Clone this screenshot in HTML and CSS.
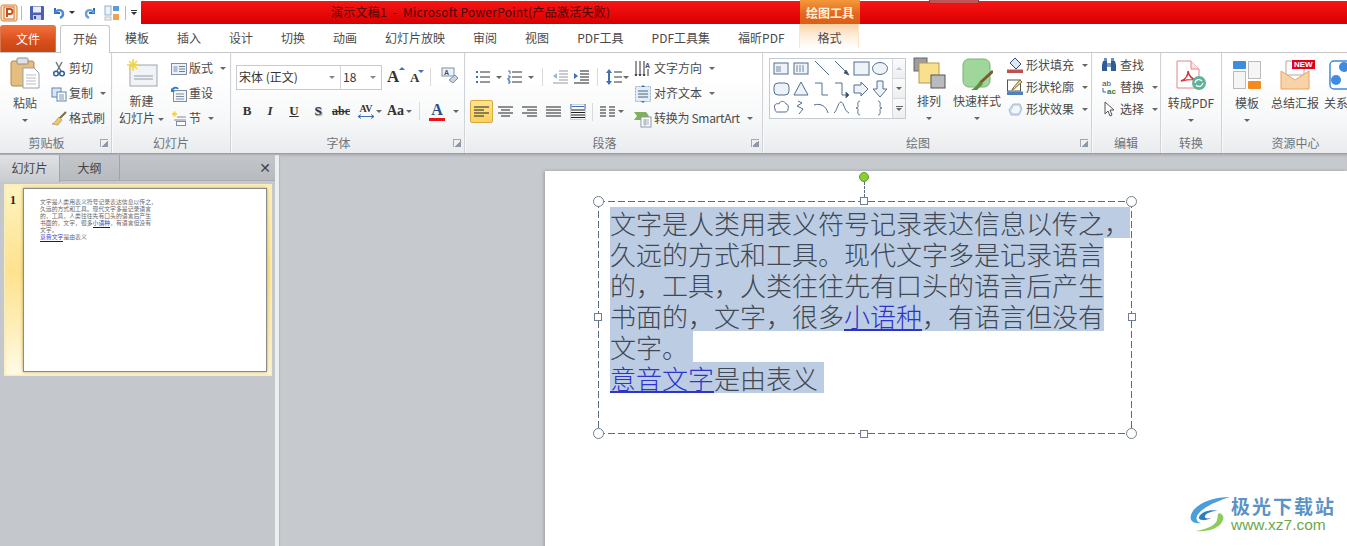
FILE: index.html
```html
<!DOCTYPE html>
<html lang="zh-CN">
<head>
<meta charset="utf-8">
<title>演示文稿1 - Microsoft PowerPoint</title>
<link rel="stylesheet" href="styles.css">
</head>
<body>
<div class="app">
  <header class="titlebar">
    <div class="qat">
      <svg class="ic-pp" width="18" height="18" viewBox="0 0 18 18"><rect x="1" y="1" width="16" height="16" rx="2" fill="#fbe3c8" stroke="#d9812f"/><rect x="4" y="3" width="10" height="12" fill="#fff" stroke="#d9691f"/><path d="M7 13V5h3a2 2 0 0 1 0 5H7" fill="none" stroke="#c8501a" stroke-width="2"/></svg>
      <i class="qat-sep"></i>
      <svg class="ic-save" width="16" height="16" viewBox="0 0 16 16"><rect x="1" y="1" width="14" height="14" rx="1" fill="#4d5fb4"/><rect x="4" y="1.500" width="8" height="6" fill="#e9eefa"/><rect x="4" y="10" width="8" height="5" fill="#c9d0e6"/><rect x="5" y="11" width="2" height="3" fill="#3d4a8f"/></svg>
      <svg class="ic-undo" width="14" height="14" viewBox="0 0 14 14"><path d="M3 2v5h5" fill="none" stroke="#2f6db5" stroke-width="2"/><path d="M3 7c2-4 8-4 8 1 0 2-1 3-3 4" fill="none" stroke="#4a8ad0" stroke-width="2.400"/></svg>
      <i class="caret caret-dark"></i>
      <svg class="ic-redo" width="14" height="14" viewBox="0 0 14 14"><path d="M11 2v5H6" fill="none" stroke="#2f6db5" stroke-width="2"/><path d="M11 7C9 3 3 3 3 8c0 2 1 3 3 4" fill="none" stroke="#6aa0d8" stroke-width="2.400"/></svg>
      <svg class="ic-layout" width="16" height="16" viewBox="0 0 16 16"><rect x="1" y="1" width="6" height="9" fill="#eef3f8" stroke="#8fb1d0"/><rect x="9" y="1" width="6" height="5" fill="#5a9bd8"/><rect x="1" y="12" width="6" height="3" fill="#eef3f8" stroke="#c0c0c0"/><rect x="9" y="9" width="6" height="6" fill="#f2a24a"/></svg>
      <i class="qat-sep qat-sep-b"></i>
      <span class="qat-more"><i class="qat-bar"></i><i class="caret caret-dark"></i></span>
    </div>
    <div class="redbar">
      <div class="doc-title">演示文稿1 &nbsp;-&nbsp; Microsoft PowerPoint(产品激活失败)</div>
      <div class="ctx-head">绘图工具</div>
      <div class="win-tab"></div>
    </div>
  </header>

  <nav class="tabs">
    <div class="tab tab-file">文件</div>
    <div class="tab tab-active">开始</div>
    <div class="tab">模板</div>
    <div class="tab">插入</div>
    <div class="tab">设计</div>
    <div class="tab">切换</div>
    <div class="tab">动画</div>
    <div class="tab">幻灯片放映</div>
    <div class="tab">审阅</div>
    <div class="tab">视图</div>
    <div class="tab">PDF工具</div>
    <div class="tab">PDF工具集</div>
    <div class="tab">福昕PDF</div>
    <div class="tab tab-ctx">格式</div>
  </nav>

  <section class="ribbon">
    <div class="group g-clip">
      <div class="group-body">
        <div class="big big-paste">
          <svg width="30" height="32" viewBox="0 0 30 32"><rect x="1" y="4" width="23" height="25" rx="2" fill="#e4bd7f" stroke="#b08a50"/><rect x="7" y="1" width="11" height="6" rx="1" fill="#dfe3e8" stroke="#8a8f96"/><path d="M13 11h11l5 5v15H13z" fill="#fff" stroke="#9aa0a8"/><path d="M16 18h10M16 21h10M16 24h10M16 27h10" stroke="#b8bcc2"/></svg>
          <span class="big-label">粘贴</span>
          <i class="caret"></i>
        </div>
        <div class="rows">
          <div class="row"><svg width="16" height="16" viewBox="0 0 16 16"><path d="M5 1l5 9M11 1L6 10" stroke="#6d7886" stroke-width="1.500"/><circle cx="5" cy="12.500" r="2.300" fill="none" stroke="#2f5f9f" stroke-width="1.500"/><circle cx="11" cy="12.500" r="2.300" fill="none" stroke="#2f5f9f" stroke-width="1.500"/></svg><span>剪切</span></div>
          <div class="row"><svg width="16" height="16" viewBox="0 0 16 16"><rect x="1" y="2" width="9" height="9" fill="#dbe7f5" stroke="#5a84b5"/><rect x="6" y="6" width="9" height="9" fill="#fff" stroke="#5a84b5"/><path d="M8 9h5M8 11h5M8 13h5" stroke="#7b93b0"/></svg><span>复制</span><i class="caret"></i></div>
          <div class="row"><svg width="16" height="16" viewBox="0 0 16 16"><path d="M15 1L8 8" stroke="#7b6a52" stroke-width="2"/><path d="M8 6l3 3-4 5-6-1c3-1 4-4 7-7z" fill="#e9c86e" stroke="#a98a3d" stroke-width=".6"/></svg><span>格式刷</span></div>
        </div>
      </div>
      <div class="group-label has-launcher">剪贴板<i class="launcher"></i></div>
    </div>

    <div class="group g-slides">
      <div class="group-body">
        <div class="big big-new">
          <svg width="32" height="30" viewBox="0 0 32 30"><rect x="4" y="6" width="27" height="21" fill="#f1f3f6" stroke="#9aa5b2"/><path d="M8 17h19M8 20h19" stroke="#c2c8d0" stroke-width="2"/><path d="M7 0v12M1 6h12M3 2l8 8M11 2l-8 8" stroke="#f3d445" stroke-width="1.600"/></svg>
          <span class="big-label">新建</span>
          <span class="big-label">幻灯片<i class="caret caret-in"></i></span>
        </div>
        <div class="rows">
          <div class="row"><svg width="16" height="16" viewBox="0 0 16 16"><rect x=".5" y="2.500" width="15" height="11" fill="#eef2f7" stroke="#7e8ea2"/><rect x="2.500" y="5" width="4" height="6" fill="#a9c0da"/><path d="M8 5.500h6M8 8h6M8 10.500h6" stroke="#6d7c90"/></svg><span>版式</span><i class="caret"></i></div>
          <div class="row"><svg width="16" height="16" viewBox="0 0 16 16"><rect x="2.500" y="4.500" width="13" height="11" fill="#f0f3f7" stroke="#7e8ea2"/><path d="M5 8h8M5 10.500h8M5 13h8" stroke="#7e8ea2"/><path d="M1 5c1-4 5-4 6-2" fill="none" stroke="#2f7fc8" stroke-width="1.800"/><path d="M0 2v4h4z" fill="#2f7fc8"/></svg><span>重设</span></div>
          <div class="row"><svg width="16" height="16" viewBox="0 0 16 16"><path d="M1 3h5M3.500 .5v5" stroke="#f3d445" stroke-width="2"/><path d="M6 6h9M3 9h12" stroke="#7e8ea2"/><rect x="5.500" y="10.500" width="9" height="4" fill="#fff" stroke="#7e8ea2"/></svg><span>节</span><i class="caret"></i></div>
        </div>
      </div>
      <div class="group-label">幻灯片</div>
    </div>

    <div class="group g-font">
      <div class="group-body font-body">
        <div class="font-row">
          <div class="selects">
            <div class="select sel-font"><span>宋体 (正文)</span><i class="caret"></i></div>
            <div class="select sel-size"><span>18</span><i class="caret"></i></div>
          </div>
          <span class="grow-a">A<sup class="tick-up"></sup></span>
          <span class="shrink-a">A<sup class="tick-down"></sup></span>
          <i class="vsep"></i>
          <svg class="eraser" width="18" height="18" viewBox="0 0 18 18"><rect x="1" y="1" width="12" height="8" fill="#eef2f7" stroke="#7e8ea2"/><text x="3" y="7.500" class="tiny-a">A</text><path d="M8 13l6-5 3 3-5 5z" fill="#c9d4e2" stroke="#8090a4"/></svg>
        </div>
        <div class="font-row fmt-row">
          <b class="fmt fmt-b">B</b>
          <i class="fmt fmt-i">I</i>
          <span class="fmt fmt-u">U</span>
          <span class="fmt fmt-s">S</span>
          <span class="fmt fmt-abc">abc</span>
          <span class="fmt fmt-av"><span class="av-t">AV</span><svg width="16" height="5" viewBox="0 0 16 5"><path d="M0 2.500h16M3 .5L0 2.500l3 2M13 .5l3 2-3 2" fill="none" stroke="#3f6fb5"/></svg></span><i class="caret caret-sm"></i>
          <span class="fmt fmt-aa">Aa</span><i class="caret caret-sm"></i>
          <i class="vsep vsep-fmt"></i>
          <span class="fmt fmt-color">A</span><i class="caret caret-sm"></i>
        </div>
      </div>
      <div class="group-label has-launcher">字体<i class="launcher"></i></div>
    </div>

    <div class="group g-para">
      <div class="group-body para-body">
        <div class="para-left">
          <div class="para-row pr-top">
            <svg class="pi-bul" width="16" height="14" viewBox="0 0 16 14"><path d="M1 1h2v2H1zM1 6h2v2H1zM1 11h2v2H1z" fill="#3f6fb5"/><path d="M5 2h10M5 7h10M5 12h10" stroke="#333"/></svg><i class="caret"></i>
            <svg class="pi-num" width="16" height="14" viewBox="0 0 16 14"><path d="M1 1h2v3M1 6h2v2H1v2h2M1 11h2v2H1" fill="none" stroke="#3f6fb5"/><path d="M5 2h10M5 7h10M5 12h10" stroke="#333"/></svg><i class="caret"></i>
            <i class="vsep vsep-para"></i>
            <svg class="pi-out" width="16" height="14" viewBox="0 0 16 14"><path d="M7 1h9M7 4h9M7 7h9M7 10h9M1 13h15" stroke="#999"/><path d="M5 3L1 6l4 3z" fill="#9db6d4"/></svg>
            <svg class="pi-in" width="16" height="14" viewBox="0 0 16 14"><path d="M7 1h9M7 4h9M7 7h9M7 10h9M1 13h15" stroke="#222"/><path d="M1 3l4 3-4 3z" fill="#3f6fb5"/></svg>
            <i class="vsep vsep-para2"></i>
            <svg class="pi-ls" width="16" height="16" viewBox="0 0 16 16"><path d="M3 0l3 4H0zM3 16l3-4H0z" fill="#3f6fb5"/><path d="M3 3v10" stroke="#3f6fb5" stroke-width="2"/><path d="M8 3h8M8 8h8M8 13h8" stroke="#333"/></svg><i class="caret caret-tight"></i>
          </div>
          <div class="para-row pr-bottom">
            <span class="al al-on"><svg width="15" height="12" viewBox="0 0 15 12"><path d="M0 1h15M0 4h10M0 7h15M0 10h10" stroke="#222"/></svg></span>
            <span class="al"><svg width="15" height="12" viewBox="0 0 15 12"><path d="M0 1h15M3 4h9M0 7h15M3 10h9" stroke="#222"/></svg></span>
            <span class="al"><svg width="15" height="12" viewBox="0 0 15 12"><path d="M0 1h15M5 4h10M0 7h15M5 10h10" stroke="#222"/></svg></span>
            <span class="al"><svg width="15" height="12" viewBox="0 0 15 12"><path d="M0 1h15M0 4h15M0 7h15M0 10h15" stroke="#222"/></svg></span>
            <span class="al"><svg width="16" height="16" viewBox="0 0 16 16"><path d="M1 0v5M15 0v5M2 2.500h12" stroke="#3f6fb5"/><path d="M1 6h14M1 8.500h14M1 11h14M1 13.500h14" stroke="#222"/><path d="M.5 .5h15v15H.5z" fill="none" stroke="#888" stroke-opacity=".35"/></svg></span>
            <i class="vsep vsep-al"></i>
            <svg class="pi-col" width="15" height="12" viewBox="0 0 15 12"><path d="M0 1h6M0 4h6M0 7h6M0 10h6M9 1h6M9 4h6M9 7h6M9 10h6" stroke="#222"/></svg><i class="caret caret-tight"></i>
          </div>
        </div>
        <div class="rows rows-para">
          <div class="row"><svg width="18" height="18" viewBox="0 0 18 18"><path d="M2 1v15M6 1v15M10 1v15" stroke="#333"/><path d="M1 14l1 2 1-2M5 14l1 2 1-2M9 14l1 2 1-2" fill="none" stroke="#333"/><text x="11" y="8" class="tiny-b">A</text><path d="M14 9v7" stroke="#333"/></svg><span>文字方向</span><i class="caret"></i></div>
          <div class="row"><svg width="18" height="18" viewBox="0 0 18 18"><rect x="1.500" y="1.500" width="15" height="15" fill="#e3edf7" stroke="#9ab4cf" stroke-dasharray="2 1"/><path d="M4 6h10M4 9h10M4 12h10" stroke="#51657c"/><path d="M9 0l2 2H7zM9 18l2-2H7z" fill="#2f6db5"/></svg><span>对齐文本</span><i class="caret"></i></div>
          <div class="row"><svg width="18" height="18" viewBox="0 0 18 18"><path d="M0 2h12l3 4-3 4H0l3-4z" fill="#7fb05a"/><rect x="7" y="7" width="10" height="10" fill="#fff" stroke="#8a97a8"/><path d="M9 10h6M9 12h6M9 14h6M11 9v7" stroke="#a0adbb"/></svg><span class="smartart">转换为 SmartArt</span><i class="caret"></i></div>
        </div>
      </div>
      <div class="group-label has-launcher">段落<i class="launcher"></i></div>
    </div>

    <div class="group g-draw">
      <div class="group-body draw-body">
        <div class="gallery">
          <svg width="122" height="58" viewBox="0 0 122 58" fill="#eef3f9" stroke="#53708f">
            <rect x="4" y="4" width="14" height="11"/><path d="M6 8h5M6 10h5M6 12h5" stroke-width=".8"/>
            <rect x="24" y="4" width="14" height="11"/><path d="M27 6v7M30 6v7M33 6v7" stroke-width=".8"/>
            <path d="M45 2l14 14" fill="none"/>
            <path d="M65 2l13 13" fill="none"/><path d="M76 11l3 5-5-2z" fill="#444"/>
            <rect x="84" y="3" width="15" height="13"/>
            <ellipse cx="110" cy="9.500" rx="7.500" ry="6"/>
            <rect x="4" y="24" width="15" height="12" rx="4"/>
            <path d="M31 23l7 13H24z"/>
            <path d="M45 24h7v12h6" fill="none"/>
            <path d="M65 24h7v12h5" fill="none"/><path d="M76 33l3 3-3 3z" fill="#444"/>
            <path d="M84 26h7v-3l7 7-7 7v-3h-7z"/>
            <path d="M107 22h6v8h4l-7 8-7-8h4z"/>
            <path d="M5 50c-2-5 2-6 4-5 1-4 6-3 7 0 2 0 3 3 2 5 0 2-1 3-3 3H7c-1 0-2-1-2-3z" fill="#fff"/>
            <path d="M28 42l4 2-5 3 6 3-4 5" fill="none"/>
            <path d="M44 46c7-2 12 1 14 8" fill="none"/>
            <path d="M64 54c3-2 4-11 7-11s3 9 8 11" fill="none"/>
            <path d="M90 42c-3 0-2 4-2 5s0 2-2 2c2 0 2 1 2 2s-1 5 2 5" fill="none"/>
            <path d="M108 42c3 0 2 4 2 5s0 2 2 2c-2 0-2 1-2 2s1 5-2 5" fill="none"/>
          </svg>
          <div class="gal-scroll">
            <span class="gs gs-off"><i class="tri-up"></i></span>
            <span class="gs"><i class="caret"></i></span>
            <span class="gs gs-more"><i class="more-bar"></i><i class="caret"></i></span>
          </div>
        </div>
        <div class="big big-arr">
          <svg width="33" height="32" viewBox="0 0 33 32"><rect x="1" y="1" width="13" height="13" fill="#9a9da3" stroke="#666"/><rect x="6" y="6" width="20" height="20" fill="#f8e08e" stroke="#b79a46"/><rect x="18" y="18" width="14" height="13" fill="#b8babd" stroke="#555"/></svg>
          <span class="big-label">排列</span>
          <i class="caret"></i>
        </div>
        <div class="big big-style">
          <svg width="32" height="32" viewBox="0 0 32 32"><rect x="2" y="1" width="27" height="28" rx="6" fill="#9fd69a" stroke="#7fae7c"/><path d="M32 13L19 25" stroke="#7b5a32" stroke-width="3"/><path d="M19 23l3 3-6 6H10c4-2 6-5 9-9z" fill="#5f8f3f"/></svg>
          <span class="big-label">快速样式</span>
          <i class="caret"></i>
        </div>
        <div class="rows rows-tight rows-shape">
          <div class="row"><svg width="16" height="16" viewBox="0 0 16 16"><path d="M8 1l6 6-5 5-6-6z" fill="#dfe8f2" stroke="#2f4f77"/><rect y="12.500" width="16" height="3.500" fill="#c0504d"/></svg><span>形状填充</span><i class="caret"></i></div>
          <div class="row"><svg width="16" height="16" viewBox="0 0 16 16"><rect x=".5" y="1" width="13" height="11" fill="#fff" stroke="#555"/><path d="M13 1L6 9l-1 2 2-1 8-7z" fill="#f0d48a" stroke="#8a6d2f"/><rect y="12.500" width="16" height="3.500" fill="#4f81bd"/></svg><span>形状轮廓</span><i class="caret"></i></div>
          <div class="row"><svg width="16" height="16" viewBox="0 0 16 16"><path d="M2 9l4-6h7l2 5-3 6H4z" fill="#c9d9ee" stroke="#a7bdd9"/><path d="M4 10l3-5h5l1 4-2 3H6z" fill="#f3f7fc"/></svg><span>形状效果</span><i class="caret"></i></div>
        </div>
      </div>
      <div class="group-label has-launcher">绘图<i class="launcher"></i></div>
    </div>

    <div class="group g-edit">
      <div class="group-body edit-body">
        <div class="rows rows-tight">
          <div class="row"><svg width="16" height="16" viewBox="0 0 16 16"><path d="M2 4h4v10H1V8zM10 4h4l1 4v6h-5z" fill="#2f5a92"/><rect x="6" y="6" width="4" height="4" fill="#7d9cc4"/><rect x="3" y="1" width="3" height="3" fill="#6d8fbd"/><rect x="10" y="1" width="3" height="3" fill="#6d8fbd"/></svg><span>查找</span></div>
          <div class="row"><svg width="16" height="16" viewBox="0 0 16 16"><text x="1" y="7" class="tiny-c">ab</text><text x="6" y="15" class="tiny-d">ac</text><path d="M2 9v4h3" fill="none" stroke="#2f6db5"/></svg><span>替换</span><i class="caret"></i></div>
          <div class="row"><svg width="16" height="16" viewBox="0 0 16 16"><path d="M4 1v12l3-3 2 5 2-1-2-5h4z" fill="#fff" stroke="#555"/></svg><span>选择</span><i class="caret"></i></div>
        </div>
      </div>
      <div class="group-label">编辑</div>
    </div>

    <div class="group g-conv">
      <div class="group-body">
        <div class="big big-pdf">
          <svg width="32" height="32" viewBox="0 0 32 32"><path d="M2 1h14l8 8v19H2z" fill="#fff" stroke="#e0878a"/><path d="M16 1v8h8" fill="#fbe5e5" stroke="#e0878a"/><path d="M6 21c5-2 7-6 7-10 1 5 4 8 8 9-5-1-10 0-15 1z" fill="none" stroke="#d8343a" stroke-width="1.400"/><circle cx="24" cy="23" r="7" fill="#5fb39a"/><path d="M20 23a4 4 0 0 1 7-2M28 23a4 4 0 0 1-7 2" fill="none" stroke="#fff" stroke-width="1.300"/></svg>
          <span class="big-label">转成PDF</span>
          <i class="caret"></i>
        </div>
      </div>
      <div class="group-label">转换</div>
    </div>

    <div class="group g-res">
      <div class="group-body res-body">
        <div class="big big-res">
          <svg width="30" height="30" viewBox="0 0 30 30"><rect x="1" y="1" width="13" height="8" rx="1" fill="#3f8be0"/><rect x="16.500" y="1.500" width="12" height="17" fill="#f5f5f5" stroke="#bbb"/><rect x="1.500" y="11.500" width="12" height="17" fill="#f5f5f5" stroke="#bbb"/><rect x="16" y="21" width="13" height="8" rx="1" fill="#f58a1f"/></svg>
          <span class="big-label">模板</span>
          <i class="caret"></i>
        </div>
        <div class="big big-sum">
          <span class="mail"><svg width="30" height="30" viewBox="0 0 30 30"><path d="M6 1h18v14H6z" fill="#fff" stroke="#aaa"/><path d="M1 11l14 9 14-9v18H1z" fill="#f8d3a8" stroke="#e8a45f"/></svg><b class="new-badge">NEW</b></span>
          <span class="big-label">总结汇报</span>
        </div>
        <div class="big big-rel">
          <svg width="30" height="30" viewBox="0 0 30 30"><rect x="1" y="1" width="29" height="28" rx="4" fill="#fff" stroke="#3f8be0" stroke-width="1.500"/><circle cx="15" cy="7" r="5" fill="#3f8be0"/><circle cx="7" cy="20" r="5" fill="#3f8be0"/><circle cx="24" cy="20" r="5" fill="#3f8be0"/></svg>
          <span class="big-label">关系</span>
        </div>
      </div>
      <div class="group-label">资源中心</div>
    </div>
  </section>

  <main class="workspace">
    <aside class="panel">
      <div class="panel-tabs">
        <div class="ptab ptab-on">幻灯片</div>
        <div class="ptab">大纲</div>
        <div class="panel-close">✕</div>
      </div>
      <div class="thumb-item">
        <span class="thumb-num">1</span>
        <div class="thumb-slide">
          <p class="thumb-text">文字是人类用表义符号记录表达信息以传之，<br>久远的方式和工具。现代文字多是记录语言<br>的，工具，人类往往先有口头的语言后产生<br>书面的，文字，很多<a class="thumb-link">小语种</a>，有语言但没有<br>文字。<br><a class="thumb-link">意音文字</a>是由表义</p>
        </div>
      </div>
    </aside>
    <div class="splitter"></div>
    <div class="stage">
      <div class="slide">
        <div class="textbox">
          <span class="sel">文字是人类用表义符号记录表达信息以传之，</span>
          <span class="sel">久远的方式和工具。现代文字多是记录语言</span>
          <span class="sel">的，工具，人类往往先有口头的语言后产生</span>
          <span class="sel">书面的，文字，很多<a class="link">小语种</a>，有语言但没有</span>
          <span class="sel sel-short">文字。</span>
          <span class="sel sel-last"><a class="link">意音文字</a>是由表义</span>
          <i class="rot-stem"></i>
          <i class="rot"></i>
          <i class="h h-tl"></i><i class="h h-tr"></i><i class="h h-bl"></i><i class="h h-br"></i>
          <i class="s s-t"></i><i class="s s-b"></i><i class="s s-l"></i><i class="s s-r"></i>
        </div>
      </div>
      <div class="watermark">
        <svg width="42" height="38" viewBox="0 0 42 38"><path d="M41 2C25 2 6 8 2 20c-2 7 4 9 10 8C6 27 6 21 12 16 20 9 32 5 41 2z" fill="#4a9fd8"/><path d="M10 22c2-5 12-8 19-6-6 0-12 2-13 5-1 2 2 3 6 2-5 3-13 3-12-1z" fill="#2f7fc0"/><path d="M30 18c4 1 6 4 3 9-4 7-15 10-26 9 11-2 20-6 21-11 1-3 0-5 2-7z" fill="#8ecb5a"/></svg>
        <div class="wm-text"><span class="wm-cn">极光下载站</span><span class="wm-url">www.xz7.com</span></div>
      </div>
    </div>
  </main>
</div>
</body>
</html>
```
FILE: styles.css
```css
* { box-sizing: border-box; }
html, body { margin: 0; height: 100%; overflow: hidden; background: #fff; }
body { font: 12px/1.2 "Noto Sans CJK SC", "Liberation Sans", sans-serif; color: #4a4a4a; }
i { font-style: normal; display: block; }
svg { display: block; flex: none; }
.app { width: 1347px; height: 546px; display: flex; flex-direction: column; overflow: hidden; }

/* title bar */
.titlebar { display: flex; height: 24px; flex: none; background: #fff; }
.qat { width: 141px; flex: none; display: flex; align-items: center; padding: 1px 0 0 0; }
.ic-pp { margin-left: 0; }
.qat-sep { width: 1px; height: 14px; background: #b9b9b9; margin-left: 3px; }
.ic-save { margin-left: 7px; }
.ic-undo { margin-left: 7px; }
.caret-dark { margin-left: 3px; border-top-color: #333 !important; }
.ic-redo { margin-left: 8px; }
.ic-layout { margin-left: 7px; }
.qat-sep-b { margin-left: 5px; }
.qat-more { display: flex; flex-direction: column; align-items: center; gap: 1px; margin-left: 4px; width: 8px; }
.qat-bar { width: 6px; height: 1px; background: #333; }
.qat-more .caret-dark { margin-left: 0; }
.redbar { flex: 1; margin-top: 1px; display: flex; background: linear-gradient(#f51616, #ec0a0a 45%, #d60000); }
.doc-title { margin-left: 190px; width: 279px; color: #4a0505; line-height: 22px; white-space: nowrap; font-size: 12px; letter-spacing: .25px; }
.ctx-head { margin-left: 190px; margin-top: -1px; width: 60px; height: 24px; background: linear-gradient(#f39a3c, #e2661c 60%, #dd5d14); color: #fff3df; font-weight: 700; text-align: center; line-height: 25px; }
.win-tab { margin-left: 69px; margin-top: -1px; width: 50px; height: 4px; background: #bf5555; border: 1px solid #7a4040; border-top: 0; }

/* tabs */
.tabs { display: flex; height: 29px; flex: none; background: #fff; border-bottom: 1px solid #c4c6c9; padding-top: 1px; }
.tab { padding: 0 14px; line-height: 26px; color: #4a4a4a; white-space: nowrap; }
.tab-file { width: 56px; padding: 0; margin-right: 4px; height: 27px; text-align: center; color: #fff; border-radius: 3px 3px 0 0; background: linear-gradient(#f0713c, #d9501e 55%, #c94512); border: 1px solid #d8774d; border-bottom: 0; }
.tab-active { width: 50px; padding: 0 12px; margin-right: 1px; height: 28px; background: #fff; border: 1px solid #c4c6c9; border-bottom: 0; border-radius: 3px 3px 0 0; z-index: 1; }
.tab-ctx { width: 60px; padding: 0 18px; margin-left: 0; margin-top: -1px; height: 24px; line-height: 27px; background: linear-gradient(#fbd3a6, #fef0df 55%, #fff); border-left: 1px solid #fbe6cd; border-right: 1px solid #fbe6cd; }

/* ribbon */
.ribbon { display: flex; height: 101px; flex: none; background: linear-gradient(#fff 25%, #f6f7f8 70%, #e9ebee); border-bottom: 1px solid #9c9fa3; box-shadow: 0 1px 1px #b0b2b6; position: relative; z-index: 2; }
.group { display: flex; flex-direction: column; flex: none; border-right: 1px solid #cfd2d6; box-shadow: 1px 0 0 #fafafa; }
.group-body { flex: 1; display: flex; min-height: 0; }
.group-label { height: 20px; flex: none; text-align: center; line-height: 20px; color: #6f7276; position: relative; }
.has-launcher { padding-right: 18px; }
.launcher { position: absolute; right: 3px; top: 6px; width: 8px; height: 8px; border: 1px solid #a5a8ac; border-width: 1px 0 0 1px; background: linear-gradient(135deg, transparent 50%, #8d99a8 50%); }
.g-clip { width: 112px; } .g-slides { width: 119px; } .g-font { width: 234px; } .g-para { width: 298px; } .g-draw { width: 329px; } .g-edit { width: 69px; } .g-conv { width: 61px; } .g-res { width: 147px; border-right: 0; }

.caret { width: 0; height: 0; flex: none; border: 3px solid transparent; border-top: 3px solid #666; border-bottom: 0; }
.caret-in { display: inline-block; vertical-align: middle; margin-left: 3px; }
.caret-sm { margin-left: 2px; }
.big { display: flex; flex-direction: column; align-items: center; flex: none; }
.big-label { line-height: 17px; white-space: nowrap; }
.big .caret { margin-top: 8px; }
.big .caret-in { margin-top: 0; }
.big-paste { width: 50px; padding-top: 4px; }
.big-paste .big-label { margin-top: 5px; }
.big-new { width: 59px; padding-top: 6px; }
.big-new svg { margin-bottom: 3px; }
.rows { display: flex; flex-direction: column; padding-top: 3px; }
.row { display: flex; align-items: center; height: 25px; gap: 2px; white-space: nowrap; }
.row .caret { margin-left: 5px; }
.rows-tight { padding-top: 1px; }
.rows-tight .row { height: 22px; }
.g-clip .row { padding-left: 1px; }

/* font group */
.font-body { flex-direction: column; padding-left: 5px; }
.font-row { display: flex; align-items: center; }
.selects { display: flex; margin-top: 12px; border: 1px solid #c7cbd0; height: 25px; width: 146px; background: #fff; flex: none; }
.select { display: flex; align-items: center; justify-content: space-between; padding: 0 5px 0 2px; color: #333; }
.select .caret { border-top-color: #888; }
.sel-font { width: 104px; border-right: 1px solid #d3d6da; }
.sel-size { width: 40px; }
.grow-a, .shrink-a { font: 700 17px "Liberation Serif", serif; color: #333; position: relative; margin-top: 10px; }
.grow-a { margin-left: 5px; width: 20px; }
.shrink-a { margin-left: 3px; font-size: 13px; width: 16px; margin-top: 12px; }
.tick-up, .tick-down { position: absolute; top: 0; right: 2px; width: 0; height: 0; border: 3px solid transparent; }
.tick-up { border-bottom: 3px solid #3f6fb5; border-top: 0; }
.tick-down { border-top: 3px solid #3f6fb5; border-bottom: 0; }
.eraser { margin: 8px 0 0 10px; }
.vsep { width: 1px; height: 18px; background: #d8dadd; flex: none; margin-left: 4px; margin-top: 10px; }
.fmt-row { margin-top: 9px; height: 24px; padding-left: 5px; }
.fmt { font-family: "Liberation Serif", serif; color: #333; font-size: 13px; text-align: center; font-weight: 700; font-style: normal; flex: none; }
.fmt-b { width: 12px; }
.fmt-i { display: block; width: 12px; margin-left: 11px; font-style: italic; }
.fmt-u { width: 12px; margin-left: 12px; text-decoration: underline; }
.fmt-s { width: 12px; margin-left: 12px; text-shadow: 1px 1px 1px #777; }
.fmt-abc { margin-left: 8px; text-decoration: line-through; font-size: 12px; }
.fmt-av { margin-left: 8px; display: flex; flex-direction: column; align-items: center; font-size: 10px; line-height: 10px; }
.fmt-aa { margin-left: 5px; font-size: 14px; }
.vsep-fmt { margin: 0 0 0 7px; }
.fmt-color { margin-left: 9px; width: 16px; font-size: 16px; color: #2b4f8c; border-bottom: 3px solid #e8141c; line-height: 16px; }
.fmt-color + .caret { margin-left: 8px; }

/* paragraph */
.para-left { width: 169px; flex: none; display: flex; flex-direction: column; }
.para-row { display: flex; align-items: center; }
.pr-top { margin-top: 14px; height: 20px; padding-left: 10px; }
.pr-top .caret { margin-left: 5px; }
.pi-num { margin-left: 5px; }
.vsep-para { margin: 0 0 0 8px; height: 18px; }
.pi-out { margin-left: 9px; }
.pi-in { margin-left: 5px; }
.vsep-para2 { margin: 0 0 0 8px; height: 18px; }
.pi-ls { margin-left: 8px; }
.pr-top .caret-tight, .caret-tight { margin-left: 1px; }
.pr-bottom { margin-top: 13px; height: 23px; padding-left: 5px; }
.al { width: 23px; height: 23px; margin-right: 1px; display: flex; align-items: center; justify-content: center; flex: none; border: 1px solid transparent; }
.al-on { background: linear-gradient(#fde58f, #fbd05f); border-color: #d9a93b; border-radius: 2px; }
.vsep-al { margin: 0 0 0 2px; height: 18px; }
.pi-col { margin-left: 7px; }
.pi-col + .caret { margin-left: 3px; }
.smartart { letter-spacing: -.3px; }

/* drawing */
.draw-body { padding-left: 6px; padding-top: 5px; }
.gallery { display: flex; width: 137px; height: 61px; border: 1px solid #c4cad2; background: #fff; flex: none; }
.gallery svg { width: 122px; }
.gal-scroll { width: 14px; display: flex; flex-direction: column; border-left: 1px solid #d5d8dc; }
.gs { flex: 1; display: flex; flex-direction: column; gap: 1px; align-items: center; justify-content: center; background: linear-gradient(#fbfbfc, #eceef0); border-bottom: 1px solid #d5d8dc; }
.gs:last-child { border-bottom: 0; }
.tri-up { width: 0; height: 0; border: 3px solid transparent; border-bottom: 3px solid #c3c6ca; border-top: 0; }
.more-bar { width: 7px; height: 1px; background: #666; }
.big-arr { width: 46px; margin: -5px 0 0 0; padding-top: 4px; }
.big-arr .big-label { margin-top: 3px; }
.big-style { width: 50px; margin: -5px 0 0 0; padding-top: 5px; }
.big-style .big-label { margin-top: 2px; }
.rows-shape { margin: -5px 0 0 5px; }
.rows-shape .row { gap: 3px; }

/* edit / convert / resources */
.edit-body { padding-left: 9px; }
.edit-body .row { gap: 3px; }
.tiny-a, .tiny-b { font: 700 7px "Liberation Sans", sans-serif; fill: #2f4f77; }
.tiny-c { font: 8px "Liberation Sans", sans-serif; fill: #444; }
.tiny-d { font: 700 8px "Liberation Sans", sans-serif; fill: #3a7a2a; }
.big-pdf { width: 60px; padding-top: 7px; }
.big-pdf .big-label { margin-top: 2px; }
.res-body { overflow: hidden; padding-top: 7px; }
.big-res { width: 48px; margin-left: 1px; }
.big-res .big-label, .big-sum .big-label, .big-rel .big-label { margin-top: 4px; }
.big-sum { width: 48px; margin-left: 0; }
.big-rel { width: 30px; margin-left: 5px; align-items: flex-start; }
.big-rel svg { margin-left: 5px; }
.mail { position: relative; display: block; }
.new-badge { position: absolute; top: 0; left: 12px; background: #e2001a; color: #fff; font: 700 8px/9px "Liberation Sans", sans-serif; padding: 0 2px; }

/* workspace */
.workspace { flex: 1; display: flex; min-height: 0; background: #c6c9cd; }
.panel { width: 275px; flex: none; background: #c4c7cb; }
.panel-tabs { display: flex; height: 27px; background: linear-gradient(#c3c6ca, #b7babe); border-bottom: 1px solid #a9acb1; padding-top: 1px; position: relative; }
.ptab { width: 60px; text-align: center; line-height: 26px; color: #444; border-right: 1px solid #a0a3a8; font-size: 12px; }
.ptab-on { height: 27px; background: linear-gradient(#dfe1e4, #c9ccd0); }
.panel-close { position: absolute; right: 4px; top: 0; font: 700 14px/28px "DejaVu Sans", sans-serif; color: #444; }
.thumb-item { margin: 3px 3px 0 4px; width: 268px; height: 192px; display: flex; padding-top: 3px; border: 1px solid #f8eebd; background: linear-gradient(#fff3c0, #fde28f 45%, #feeeb8 75%, #fffbe8); box-shadow: inset 0 0 3px #fbe9a5; }
.thumb-num { width: 18px; text-align: right; font: 700 12px "Liberation Serif", serif; color: #222; padding: 5px 7px 0 0; flex: none; }
.thumb-slide { width: 244px; height: 184px; background: #fff; border: 1px solid #8a8a8a; box-shadow: 0 0 3px #b79d55; padding: 9px 0 0 16px; }
.thumb-text { margin: 0; font-size: 5.850px; line-height: 7px; color: #666; white-space: nowrap; }
.thumb-link { color: #3a3fd0; border-bottom: 1px solid #222; }
.splitter { width: 5px; flex: none; background: #eceef0; border-right: 1px solid #b5b8bc; }
.stage { flex: 1; position: relative; padding: 17px 0 0 265px; box-shadow: inset 0 3px 3px -2px #a0a3a8; }
.slide { width: 802px; height: 400px; background: #fff; position: relative; box-shadow: -1px 0 3px #9a9da2; }
.textbox { position: absolute; left: 53px; top: 30px; width: 534px; height: 233px; padding: 6px 0 0 12px; color: #3f4853; font-size: 26px; font-weight: 300; line-height: 31px; white-space: nowrap;
  background:
    linear-gradient(90deg, #5a6d80 70%, transparent 0) 0 0 / 10px 1px repeat-x,
    linear-gradient(90deg, #5a6d80 70%, transparent 0) 0 100% / 10px 1px repeat-x,
    linear-gradient(#5a6d80 70%, transparent 0) 0 0 / 1px 10px repeat-y,
    linear-gradient(#5a6d80 70%, transparent 0) 100% 0 / 1px 10px repeat-y; }
.sel { display: block; width: fit-content; background: #bccde3; }
.sel-short { padding-right: 5px; }
.sel-last { padding-right: 6px; }
.link { color: #2c34cc; text-decoration: underline; }
.h, .s, .rot, .rot-stem { position: absolute; background: #fff; border: 1px solid #6f7f8f; }
.h { width: 11px; height: 11px; border-radius: 50%; }
.h-tl { left: -5px; top: -5px; } .h-tr { right: -5px; top: -5px; } .h-bl { left: -5px; bottom: -5px; } .h-br { right: -5px; bottom: -5px; }
.s { width: 8px; height: 8px; }
.s-t { left: 262px; top: -4px; } .s-b { left: 262px; bottom: -4px; } .s-l { left: -4px; top: 112px; } .s-r { right: -4px; top: 112px; }
.rot { left: 261px; top: -29px; width: 10px; height: 10px; border-radius: 50%; background: #8ccf33; border-color: #5f9a2a; }
.rot-stem { left: 266px; top: -19px; width: 0; height: 15px; border: 0; border-left: 1px dashed #5a6d80; background: none; }
.watermark { position: absolute; right: 11px; bottom: 13px; display: flex; align-items: center; background: rgba(255,255,255,.75); }
.wm-text { display: flex; flex-direction: column; }
.wm-cn { font-size: 19px; line-height: 21px; color: #5b93c6; font-weight: 700; letter-spacing: 2px; white-space: nowrap; }
.wm-url { font: 15.500px/17px "Liberation Sans", sans-serif; color: #6aa84f; white-space: nowrap; }
```
